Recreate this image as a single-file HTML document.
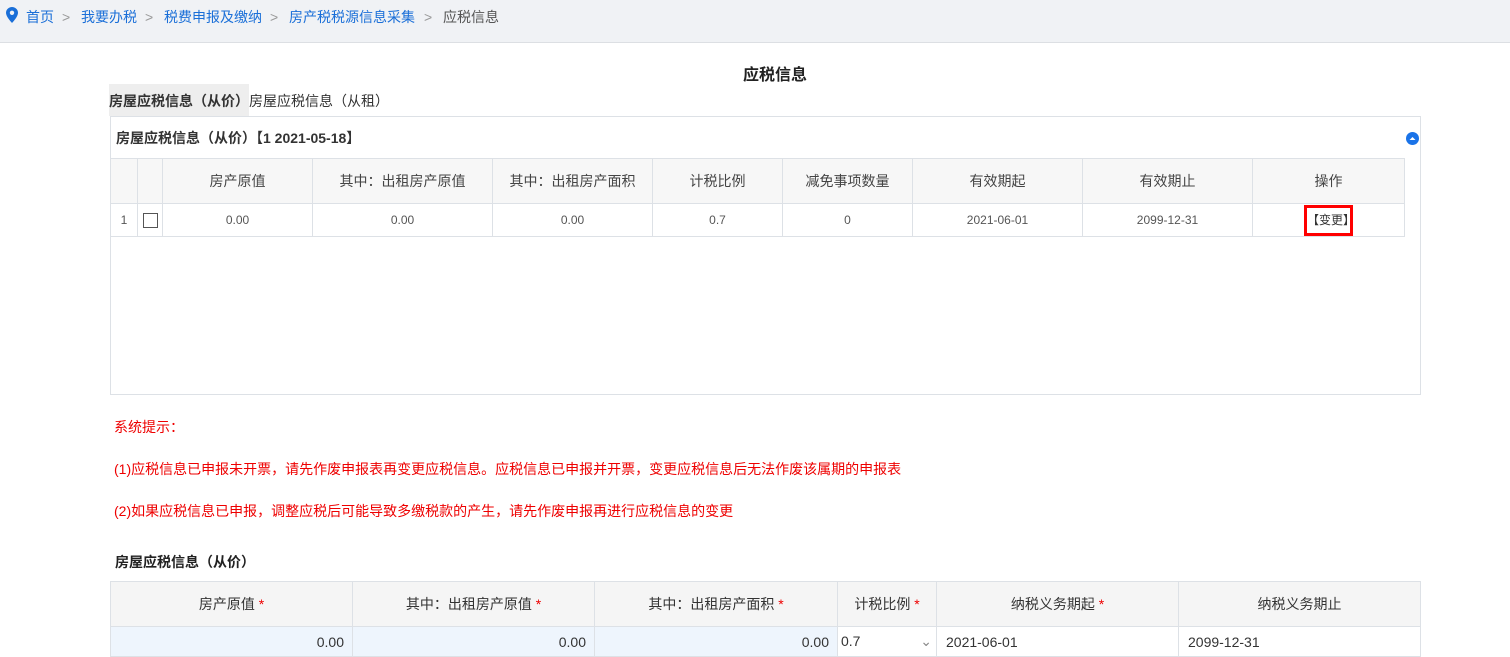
<!DOCTYPE html><html><head><meta charset="utf-8"><style>
*{margin:0;padding:0;box-sizing:border-box}
body{width:1510px;height:650px;overflow:hidden;background:#fff;font-family:"Liberation Sans","Noto Sans CJK SC",sans-serif;color:#333;position:relative}
.a{position:absolute}
.bc{left:0;top:0;width:1510px;height:43px;background:#f0f2f5;border-bottom:1px solid #dcdfe3;font-size:14px;line-height:34px}
.bc span{position:absolute;top:0}
.b{color:#1a6fd8}.g{color:#999}
table{border-collapse:collapse;position:absolute;font-size:14px}
td{border:1px solid #dde1e6;text-align:center}
.t1 td{font-size:12px;color:#555}
.t1 tr.h td{background:#f7f7f7;color:#444;font-size:14px}
.red{color:#e00;font-size:14px}
.s{color:#e00}
</style></head><body>
<div class="a bc">
<svg class="a" style="left:6px;top:7px" width="12" height="16" viewBox="0 0 12 16"><path d="M6 0C2.7 0 0 2.6 0 5.8 0 10 6 16 6 16s6-6 6-10.2C12 2.6 9.3 0 6 0z" fill="#1a6fd8"/><circle cx="6" cy="5.8" r="2.2" fill="#f0f2f5"/></svg>
<span class="b" style="left:26px">首页</span><span class="g" style="left:62px">&gt;</span>
<span class="b" style="left:81px">我要办税</span><span class="g" style="left:145px">&gt;</span>
<span class="b" style="left:164px">税费申报及缴纳</span><span class="g" style="left:270px">&gt;</span>
<span class="b" style="left:289px">房产税税源信息采集</span><span class="g" style="left:424px">&gt;</span>
<span style="left:443px;color:#555">应税信息</span>
</div>
<div class="a" style="left:0;width:1510px;top:61px;text-align:center;font-size:16px;font-weight:bold;color:#222;padding-left:40px">应税信息</div>
<div class="a" style="left:109px;top:84px;width:140px;height:32px;background:#eee;font-size:14px;font-weight:bold;line-height:34px">房屋应税信息（从价）</div>
<div class="a" style="left:249px;top:84px;font-size:14px;line-height:34px">房屋应税信息（从租）</div>
<div class="a" style="left:110px;top:116px;width:1311px;height:279px;border:1px solid #dde1e6"></div>
<div class="a" style="left:116px;top:128px;font-size:14px;font-weight:bold;color:#333">房屋应税信息（从价）【1 2021-05-18】</div>
<svg class="a" style="left:1406px;top:132px" width="13" height="13"><circle cx="6.5" cy="6.5" r="6.5" fill="#1a73e8"/><path d="M3.5 8L6.5 5 9.5 8z" fill="#fff"/></svg>
<table class="t1" style="left:110px;top:158px;width:1295px">
<tr class="h" style="height:45px"><td style="width:27px"></td><td style="width:25px"></td><td style="width:150px">房产原值</td><td style="width:180px">其中：出租房产原值</td><td style="width:160px">其中：出租房产面积</td><td style="width:130px">计税比例</td><td style="width:130px">减免事项数量</td><td style="width:170px">有效期起</td><td style="width:170px">有效期止</td><td>操作</td></tr>
<tr style="height:33px"><td>1</td><td><div style="width:15px;height:15px;border:1px solid #555;margin:auto"></div></td><td>0.00</td><td>0.00</td><td>0.00</td><td>0.7</td><td>0</td><td>2021-06-01</td><td>2099-12-31</td><td><span style="display:inline-block;border:3px solid #f00;padding:5px 0;line-height:15px;width:49px;color:#333">【变更】</span></td></tr>
</table>
<div class="a red" style="left:114px;top:417px">系统提示：</div>
<div class="a red" style="left:114px;top:459px">(1)应税信息已申报未开票，请先作废申报表再变更应税信息。应税信息已申报并开票，变更应税信息后无法作废该属期的申报表</div>
<div class="a red" style="left:114px;top:501px">(2)如果应税信息已申报，调整应税后可能导致多缴税款的产生，请先作废申报再进行应税信息的变更</div>
<div class="a" style="left:115px;top:552px;font-size:14px;font-weight:bold;color:#222">房屋应税信息（从价）</div>
<table style="left:110px;top:581px;width:1311px">
<tr style="height:45px;background:#f5f5f5"><td style="width:242px">房产原值 <span class="s">*</span></td><td style="width:242px">其中：出租房产原值 <span class="s">*</span></td><td style="width:243px">其中：出租房产面积 <span class="s">*</span></td><td style="width:99px">计税比例 <span class="s">*</span></td><td style="width:242px">纳税义务期起 <span class="s">*</span></td><td>纳税义务期止</td></tr>
<tr style="height:30px;background:#eef5fd"><td style="text-align:right;padding-right:8px">0.00</td><td style="text-align:right;padding-right:8px">0.00</td><td style="text-align:right;padding-right:8px">0.00</td><td style="text-align:left;padding-left:3px;background:#fff">0.7<span style="float:right;margin-right:4px;color:#888">&#8964;</span></td><td style="text-align:left;padding-left:9px;background:#fff">2021-06-01</td><td style="text-align:left;padding-left:9px;background:#fff">2099-12-31</td></tr>
</table>
</body></html>
